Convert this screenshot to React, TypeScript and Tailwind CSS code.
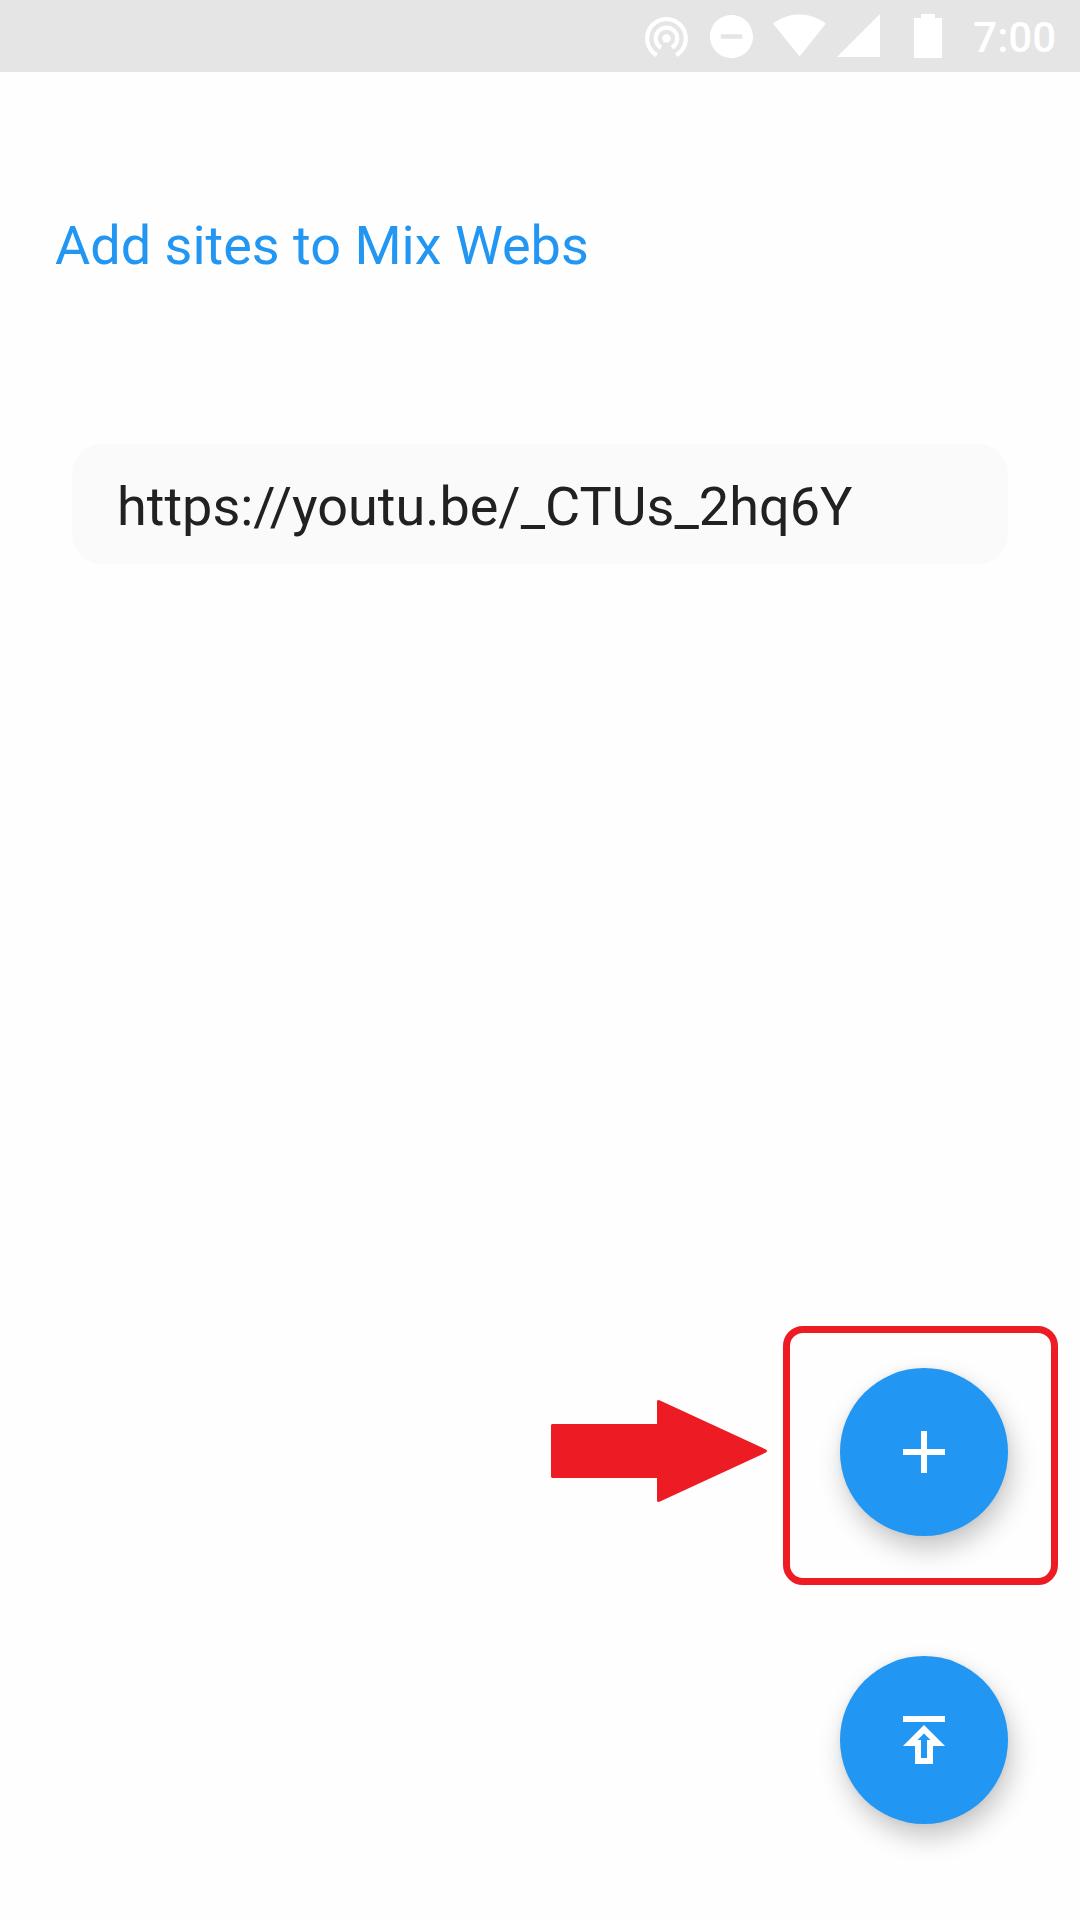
import { useState } from "react";
import type { ReactNode } from "react";

function StatusBar() {
  return (
    <header className="flex h-[72px] items-start justify-end bg-[#e5e5e5] pr-6 text-white">
      <svg className="mt-[17px] mr-[22px] h-10 w-[43px]" viewBox="2 3 20 18.65" fill="currentColor" aria-hidden="true">
        <path d="M12 11c-1.1 0-2 .9-2 2s.9 2 2 2 2-.9 2-2-.9-2-2-2zm6 2c0-3.31-2.69-6-6-6s-6 2.69-6 6c0 2.22 1.21 4.15 3 5.19l1-1.74c-1.19-.7-2-1.97-2-3.45 0-2.21 1.79-4 4-4s4 1.79 4 4c0 1.48-.81 2.75-2 3.45l1 1.74c1.79-1.04 3-2.97 3-5.19zM12 3C6.48 3 2 7.48 2 13c0 3.7 2.01 6.92 4.99 8.65l1-1.73C5.61 18.53 4 15.96 4 13c0-4.42 3.58-8 8-8s8 3.58 8 8c0 2.96-1.61 5.53-4 6.92l1 1.73c2.99-1.73 5-4.95 5-8.65 0-5.52-4.48-10-10-10z" />
      </svg>
      <svg className="mt-[15px] mr-5 size-[43px]" viewBox="2 2 20 20" fill="currentColor" aria-hidden="true">
        <path d="M12 2C6.48 2 2 6.48 2 12s4.48 10 10 10 10-4.48 10-10S17.52 2 12 2zm5 11H7v-2h10v2z" />
      </svg>
      <svg className="mt-3.5 mr-[11px] h-[43px] w-[53px]" viewBox="0.36 3 23.28 18.5" fill="currentColor" aria-hidden="true">
        <path d="M12.01 21.49L23.64 7c-.45-.34-4.93-4-11.64-4C5.28 3 .81 6.66.36 7l11.63 14.49.01.01.01-.01z" />
      </svg>
      <svg className="mt-3.5 mr-[34px] size-[43px]" viewBox="0 0 43 43" fill="currentColor" aria-hidden="true">
        <path d="M0 43H43V0z" />
      </svg>
      <svg className="mt-3.5 mr-[31px] h-11 w-7" viewBox="0 0 28 44" fill="currentColor" aria-hidden="true">
        <path d="M7 0h14v4h7v40H0V4h7z" />
      </svg>
      <time className="mt-3.5 text-[42px] leading-[48px] font-medium">7:00</time>
    </header>
  );
}

function FloatingButton({ label, children }: { label: string; children: ReactNode }) {
  return (
    <button
      type="button"
      aria-label={label}
      className="flex size-[168px] items-center justify-center rounded-full bg-[#2196f3] text-white shadow-[4px_13px_26px_rgba(0,0,0,0.22),0_0_6px_rgba(0,0,0,0.06)]"
    >
      <svg className="size-[72px]" viewBox="0 0 24 24" fill="currentColor" aria-hidden="true">
        {children}
      </svg>
    </button>
  );
}

export default function App() {
  const [url, setUrl] = useState("https://youtu.be/_CTUs_2hq6Y");

  return (
    <div className="flex min-h-screen flex-col overflow-x-hidden bg-[#fefefe] font-[Roboto,sans-serif]">
      <StatusBar />
      <main className="flex grow flex-col">
        <h1 className="mt-[142px] px-[55px] text-[54px] leading-[64px] text-[#2196f3]">Add sites to Mix Webs</h1>
        <div className="mt-[166px] px-[72px]">
          <input
            type="text"
            aria-label="Site address"
            value={url}
            onChange={(e) => setUrl(e.target.value)}
            className="h-[120px] w-full rounded-[30px] bg-[#fafafa] px-[45px] pt-1 text-[54px] text-[#212121] outline-none"
          />
        </div>
        <div className="mt-auto flex flex-col items-end gap-[120px] px-[72px] pb-24">
          <div className="relative">
            <FloatingButton label="Add site">
              <path d="M19 13h-6v6h-2v-6H5v-2h6V5h2v6h6v2z" />
            </FloatingButton>
            <div className="pointer-events-none absolute -top-[42px] -right-[50px] -bottom-[49px] -left-[57px] rounded-[20px] border-[7px] border-[#ed1c24]" />
            <svg
              className="pointer-events-none absolute top-8 right-[241px] h-[102px] w-[216px]"
              viewBox="0 0 216 102"
              fill="#ed1c24"
              aria-hidden="true"
            >
              <path d="M1 24H106V1Q107-.5 109 .5L215 49.500Q217 51 215 52.500L109 101.500Q107 102.500 106 101V78H1L0 77V25z" />
            </svg>
          </div>
          <FloatingButton label="Publish">
            <path d="M5 4h14v2H5V4zm0 10h4v6h6v-6h4l-7-7-7 7zm8-2v6h-2v-6H9.830L12 9.830 14.170 12H13z" />
          </FloatingButton>
        </div>
      </main>
    </div>
  );
}
